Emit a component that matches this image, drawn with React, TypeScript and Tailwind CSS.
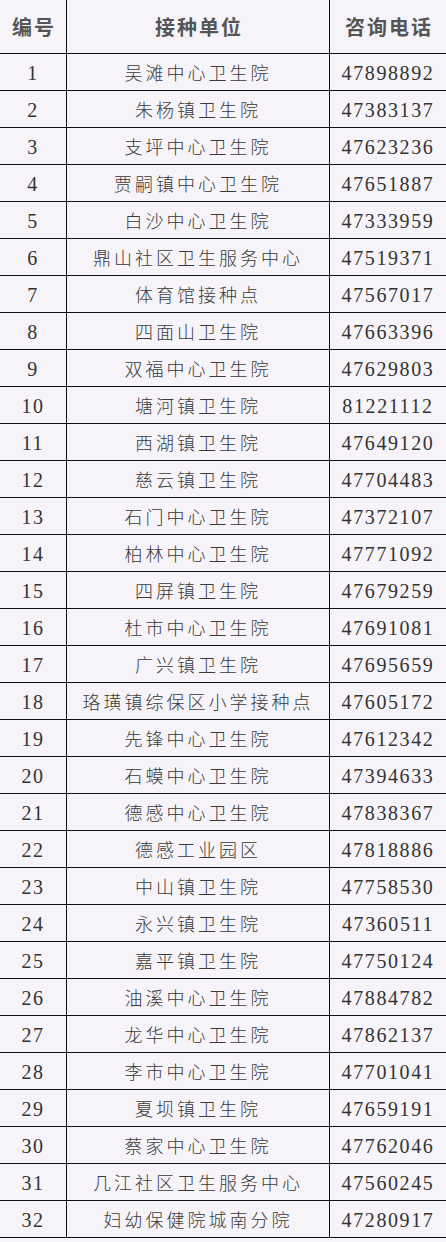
import React from 'react';

const rows: [string, string][] = [
  ['吴滩中心卫生院', '47898892'],
  ['朱杨镇卫生院', '47383137'],
  ['支坪中心卫生院', '47623236'],
  ['贾嗣镇中心卫生院', '47651887'],
  ['白沙中心卫生院', '47333959'],
  ['鼎山社区卫生服务中心', '47519371'],
  ['体育馆接种点', '47567017'],
  ['四面山卫生院', '47663396'],
  ['双福中心卫生院', '47629803'],
  ['塘河镇卫生院', '81221112'],
  ['西湖镇卫生院', '47649120'],
  ['慈云镇卫生院', '47704483'],
  ['石门中心卫生院', '47372107'],
  ['柏林中心卫生院', '47771092'],
  ['四屏镇卫生院', '47679259'],
  ['杜市中心卫生院', '47691081'],
  ['广兴镇卫生院', '47695659'],
  ['珞璜镇综保区小学接种点', '47605172'],
  ['先锋中心卫生院', '47612342'],
  ['石蟆中心卫生院', '47394633'],
  ['德感中心卫生院', '47838367'],
  ['德感工业园区', '47818886'],
  ['中山镇卫生院', '47758530'],
  ['永兴镇卫生院', '47360511'],
  ['嘉平镇卫生院', '47750124'],
  ['油溪中心卫生院', '47884782'],
  ['龙华中心卫生院', '47862137'],
  ['李市中心卫生院', '47701041'],
  ['夏坝镇卫生院', '47659191'],
  ['蔡家中心卫生院', '47762046'],
  ['几江社区卫生服务中心', '47560245'],
  ['妇幼保健院城南分院', '47280917'],
];

// digits in a Times-like serif, names in CJK
const num = "font-['Liberation_Serif',serif] text-[20px] tracking-[1.6px] text-[#333]";
const name = "font-['Noto_Sans_CJK_SC',sans-serif] text-[18px] tracking-[3px] text-[#3a3a3a] font-light";

export default function App() {
  return (
    <div className="w-[446px] h-[1242px] bg-[#f6f4f9] overflow-hidden">
      <div className="grid grid-cols-[67px_263px_116px] h-[54px] border-b border-[#111] font-['Noto_Sans_CJK_SC',sans-serif] font-bold text-[20px] tracking-[2px] text-[#555]">
        <div className="flex items-center justify-center border-r border-[#111] pl-[2px]">编号</div>
        <div className="flex items-center justify-center border-r border-[#111] pl-[2px]">接种单位</div>
        <div className="flex items-center justify-center pl-[2px]">咨询电话</div>
      </div>
      {rows.map(([unit, phone], i) => (
        <div key={i} className="grid grid-cols-[67px_263px_116px] h-[37px] border-b border-[#111]">
          <div className={`flex items-center justify-center border-r border-[#111] pt-[1px] ${num}`}>{i + 1}</div>
          <div className={`flex items-center justify-center border-r border-[#111] ${name}`}>{unit}</div>
          <div className={`flex items-center justify-center pt-[1px] ${num}`}>{phone}</div>
        </div>
      ))}
    </div>
  );
}
